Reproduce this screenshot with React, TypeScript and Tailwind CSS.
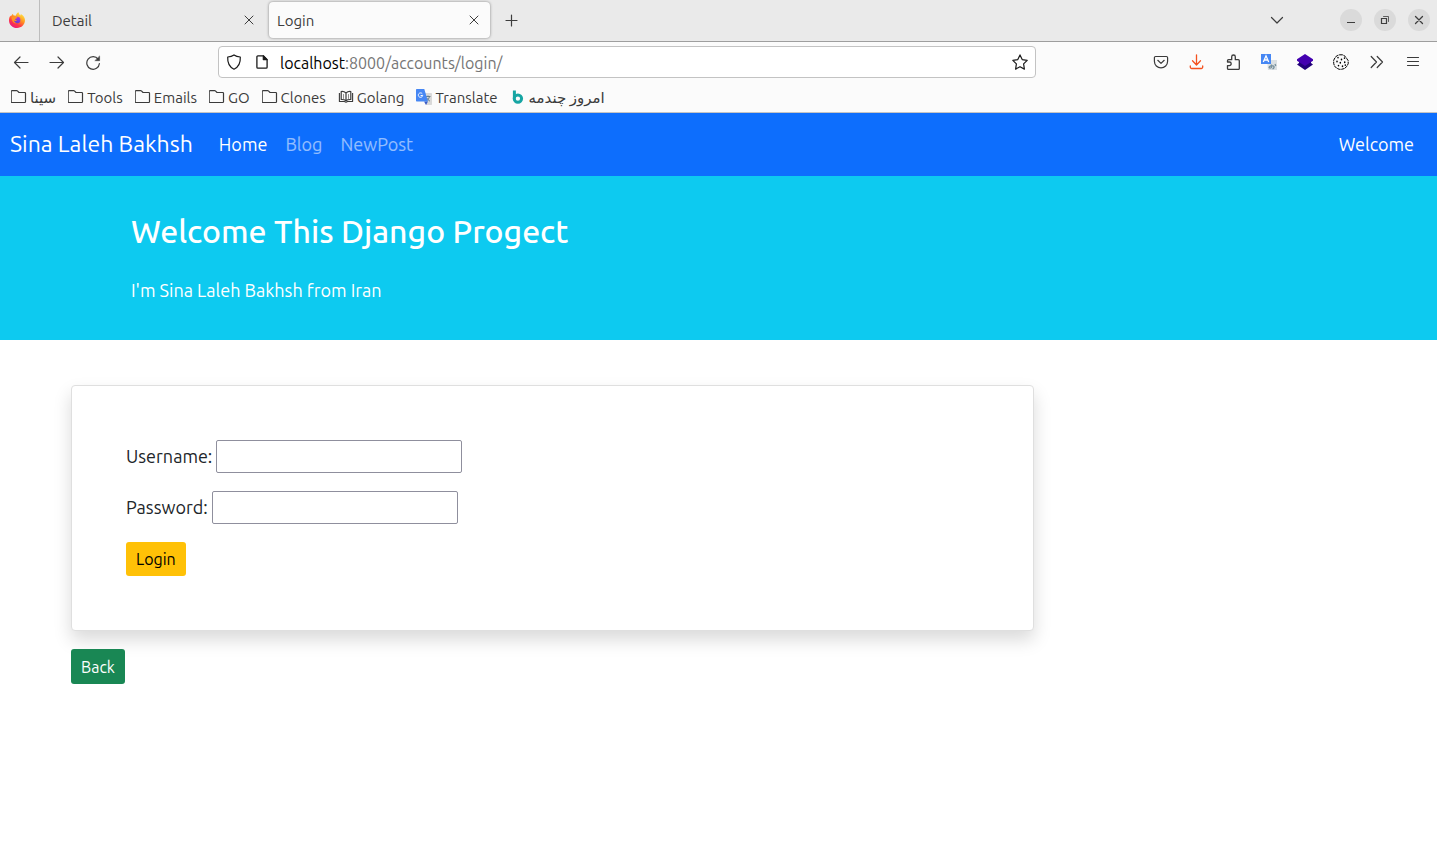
import type { ReactNode } from "react";

type IconProps = { children: ReactNode; className?: string };

function Icon({ children, className = "" }: IconProps) {
  return (
    <svg
      viewBox="0 0 16 16"
      aria-hidden="true"
      className={`size-4 shrink-0 fill-none stroke-current ${className}`}
      strokeWidth="1.2"
      strokeLinecap="round"
      strokeLinejoin="round"
    >
      {children}
    </svg>
  );
}

function FirefoxLogo() {
  return (
    <svg viewBox="0 0 16 16" aria-hidden="true" className="size-4">
      <defs>
        <linearGradient id="flame" x1="0.85" y1="0" x2="0.2" y2="1">
          <stop offset="0" stopColor="#fff44f" />
          <stop offset="0.4" stopColor="#ff9a1f" />
          <stop offset="0.7" stopColor="#ff3647" />
          <stop offset="1" stopColor="#e31587" />
        </linearGradient>
        <linearGradient id="globe" x1="0.7" y1="0" x2="0.3" y2="1">
          <stop offset="0" stopColor="#b833e1" />
          <stop offset="1" stopColor="#5b3fd0" />
        </linearGradient>
      </defs>
      <path
        d="M9.6 0.3c.2 1.7 1 2.4 2.1 3.3-.1-.8 0-1.300.1-1.700C14.500 3.300 16 5.700 16 8.300 16 12.600 12.500 16 8 16S0 12.500 0 8.400c0-1.900.6-3.700 1.500-4.800.1.5.2.7.4 1C2.300 3.400 3 2.400 4 1.800c0 .7.200 1.300.8 1.800.8-.1 1.400 0 2 .2C7.100 2.300 8 .9 9.600.3Z"
        fill="url(#flame)"
      />
      <circle cx="8.200" cy="8" r="3.200" fill="url(#globe)" />
      <path
        d="M2.500 5.300c1.400-1.100 3-1.100 4.300-.3l1.700.3c-.2.900-1 1.300-1.900 1.500-.6.200-.8.600-.6 1 .8 0 1.300.3 1.900.1-.5 1.300-2.200 1.200-3 .7.200 1.400 1.300 2.400 3 2.500-3 1.200-5.400-2.300-5.400-5.800Z"
        fill="#ff9422"
      />
    </svg>
  );
}

function CloseIcon() {
  return (
    <Icon>
      <path d="M4 4l8 8M12 4l-8 8" strokeWidth="1" />
    </Icon>
  );
}

function FolderIcon() {
  return (
    <Icon>
      <path d="M1 13.500h12.700a.8.800 0 0 0 .8-.8V4.300a.8.800 0 0 0-.8-.8H8L6.400 1.900a1 1 0 0 0-.7-.3H1a.8.800 0 0 0-.8.800v10.300a.8.800 0 0 0 .8.800Z" />
    </Icon>
  );
}

function BookIcon() {
  return (
    <Icon>
      <path d="M8 4C6.500 2.600 4.800 2.300 3.200 2.500v8c1.900-.1 3.600.2 4.800 1.300 1.200-1.100 2.900-1.400 4.800-1.300v-8C11.200 2.300 9.500 2.600 8 4ZM8 4v7.800" />
      <path d="M1.400 4v8.500h5L8 13.200l1.600-.7h5V4" strokeWidth="1.100" strokeLinecap="butt" />
      <path d="M5.500 5.500v4M10.500 5.500v4" strokeWidth="0.800" opacity="0.7" />
    </Icon>
  );
}

function TranslateIcon() {
  return (
    <svg viewBox="0 0 16 16" aria-hidden="true" className="size-4 shrink-0">
      <path d="M7 4h8.300a.7.700 0 0 1 .7.700v10.600a.7.700 0 0 1-.7.700H10Z" fill="#d9d9d9" />
      <path d="M9.500 7.500h5M12 6.500v1M13.500 7.600c-.5 2-1.700 3.500-3.300 4.500M10.800 9c.8 1.500 1.700 2.400 3.200 3.200" stroke="#607988" fill="none" strokeWidth="0.900" />
      <path d="M8 12.500h4L10 16Z" fill="#3a5bc7" />
      <path d="M.7 0h7.600L12 12.500H.7a.7.700 0 0 1-.7-.7V.7A.7.700 0 0 1 .7 0Z" fill="#4687f4" />
      <path d="M6.300 4.800A2.200 2.200 0 1 0 6.700 6.500H4.600" stroke="#fff" fill="none" strokeWidth="1" />
    </svg>
  );
}

function TealMark() {
  return (
    <svg viewBox="0 0 16 16" aria-hidden="true" className="size-4 shrink-0">
      <path d="M4.400 1.500v8" stroke="#16a5a3" strokeWidth="3" fill="none" />
      <circle cx="7.900" cy="9.600" r="3.700" stroke="#16a5a3" strokeWidth="3" fill="none" />
    </svg>
  );
}

function ToolButton({ label, children }: { label: string; children: ReactNode }) {
  return (
    <button type="button" aria-label={label} className="flex h-8 w-9 shrink-0 items-center justify-center">
      {children}
    </button>
  );
}

function WindowButton({ label, children }: { label: string; children: ReactNode }) {
  return (
    <button type="button" aria-label={label} className="flex size-[22px] items-center justify-center rounded-full bg-[#dadada]">
      {children}
    </button>
  );
}

function TabStrip() {
  return (
    <div className="flex h-[42px] items-center border-b border-[#9e9e9e] bg-[#eaeaea] pb-px text-[#3d3d3d]">
      <button type="button" aria-label="Firefox" className="-mb-px flex h-[41px] w-10 items-center border-r border-[#bdbdbd] pb-px pl-[9px]">
        <FirefoxLogo />
      </button>
      <div className="flex w-[229px] items-center justify-between pr-3 pl-3">
        <span className="pt-0.5">Detail</span>
        <button type="button" aria-label="Close Detail tab" className="flex">
          <CloseIcon />
        </button>
      </div>
      <div className="flex h-9 w-[221px] items-center justify-between rounded bg-[#fbfbfb] pr-2 pl-2 shadow-[0_0_3px_rgba(0,0,0,0.45)]">
        <span className="pt-0.5">Login</span>
        <button type="button" aria-label="Close Login tab" className="flex">
          <CloseIcon />
        </button>
      </div>
      <button type="button" aria-label="New tab" className="ml-[14px] flex">
        <Icon>
          <path d="M7.500 3v11M2 8.500h11" />
        </Icon>
      </button>
      <div className="mr-[7px] ml-auto flex items-center gap-3">
        <button type="button" aria-label="List all tabs" className="mr-[43px] flex">
          <Icon>
            <path d="M2.500 5.500L8 11l5.500-5.500" />
          </Icon>
        </button>
        <WindowButton label="Minimize">
          <Icon>
            <path d="M4 10.500h8" strokeLinecap="butt" strokeWidth="1" />
          </Icon>
        </WindowButton>
        <WindowButton label="Restore">
          <Icon>
            <path d="M4.500 6.500h5v5h-5Z" strokeLinejoin="miter" />
            <path d="M6.500 4.500h5v5" strokeWidth="0.800" strokeLinejoin="miter" />
          </Icon>
        </WindowButton>
        <WindowButton label="Close window">
          <Icon>
            <path d="M4.500 4.500l7 7M11.500 4.500l-7 7" strokeWidth="1.300" />
          </Icon>
        </WindowButton>
      </div>
    </div>
  );
}

function NavigationBar() {
  return (
    <div className="flex h-10 items-center pr-[6px] pl-[3px] text-[#3b3b3b]">
      <ToolButton label="Back">
        <Icon>
          <path d="M15 8.500H1.500M7 3L1.500 8.500 7 14" />
        </Icon>
      </ToolButton>
      <ToolButton label="Forward">
        <Icon>
          <path d="M1 8.500h13.500M9 3l5.500 5.500L9 14" />
        </Icon>
      </ToolButton>
      <ToolButton label="Reload">
        <Icon>
          <path d="M13.200 5.300A6.300 6.300 0 1 0 14.400 9.500" />
          <path d="M14.600 2.300v4.400h-4.400Z" className="fill-current" strokeWidth="0.500" />
        </Icon>
      </ToolButton>
      <div className="mx-[107px] flex h-8 min-w-0 flex-1 items-center rounded border border-[#c3c3c3] bg-white px-[7px] text-[#1a1a1a]">
        <Icon className="mr-3">
          <path d="M8 .9c1.800 1.300 3.800 1.900 6.300 2.100.3 5.500-1.600 10-6.300 12.200C3.300 13 1.400 8.500 1.700 3 4.200 2.800 6.200 2.200 8 .9Z" strokeWidth="1.200" />
        </Icon>
        <Icon className="mr-[10px]">
          <path d="M9.300 1.800H3.900a1 1 0 0 0-1 1v10.400a1 1 0 0 0 1 1h8.200a1 1 0 0 0 1-1V5.600Z" strokeWidth="1.300" />
          <path d="M9.300 1.800v3.800h3.800Z" className="fill-current" />
        </Icon>
        <div className="min-w-0 flex-1 truncate pt-0.5 text-[16px] text-black">
          localhost<span className="text-[#757575]">:8000/accounts/login/</span>
        </div>
        <button type="button" aria-label="Bookmark this page" className="flex">
          <Icon>
            <path d="M8 .9l2.200 4.700 5 .7-3.600 3.600.8 5.200L8 12.700l-4.400 2.400.8-5.200L.8 6.300l5-.7Z" strokeWidth="1.200" />
          </Icon>
        </button>
      </div>
      <ToolButton label="Save to Pocket">
        <Icon>
          <path d="M2.600 2.500h10.800a1.200 1.200 0 0 1 1.200 1.200v3.600a6.600 6.600 0 0 1-13.200 0V3.700a1.200 1.200 0 0 1 1.200-1.200ZM4.800 6.300L8 9.400l3.200-3.100" />
        </Icon>
      </ToolButton>
      <ToolButton label="Downloads">
        <Icon className="text-[#f4511e]">
          <path d="M7.500 .8v10M3.500 6.800L7.500 11l4-4.200M1.300 12v1.100a1.400 1.400 0 0 0 1.400 1.400h9.600a1.400 1.400 0 0 0 1.400-1.400V12" strokeWidth="1.300" />
        </Icon>
      </ToolButton>
      <ToolButton label="Extensions">
        <Icon>
          <path d="M2.500 8V6.700a1 1 0 0 1 1-1h3.200V2.800a1.800 1.800 0 0 1 3.600 0v2.900h3a1 1 0 0 1 1 1v7.700a1 1 0 0 1-1 1H3.500a1 1 0 0 1-1-1v-2.800h1.900a1.800 1.800 0 0 0 0-3.600Z" strokeWidth="1.300" />
        </Icon>
      </ToolButton>
      <ToolButton label="Page translator">
        <svg viewBox="0 0 16 16" aria-hidden="true" className="size-4">
          <path d="M6 6h10v10H7Z" fill="#dbe0e3" />
          <path d="M0 0h10v10H0Z" fill="#4687f4" />
          <path d="M2.300 8L5 1.800 7.700 8M3.300 6h3.400" stroke="#fff" strokeWidth="1.300" fill="none" />
          <path d="M10.500 10.500v3c-2 1.500-3.200 0-1.500-1.200 2-1.200 4.500-.5 4 1.200-.2.700-.8 1.200-1.500 1.400M14 10l.8 2" stroke="#78909c" fill="none" strokeWidth="1.300" />
        </svg>
      </ToolButton>
      <ToolButton label="Layers">
        <svg viewBox="0 0 16 16" aria-hidden="true" className="size-4">
          <path d="M0 10.500l2-1.400V7.500h12v1.600l2 1.400L8 16Z" fill="#21007a" />
          <path d="M8 0l8 5.300v1.400L8 12 0 6.700V5.300Z" fill="#4300b0" />
        </svg>
      </ToolButton>
      <ToolButton label="Cookies">
        <Icon className="text-black">
          <path d="M6.500.8h3l2.500 1.400 1.700 2.300 1.500 2.200v3l-1.400 2.700-2.300 2.100-3 .8H6.200l-2.800-1.300L1.500 12 .7 9.500V6.300l1.500-3 2-1.700Z" strokeWidth="1" strokeDasharray="3.500 0.600" strokeLinecap="butt" />
          <path d="M5 3.500v.3M8.500 5.300v.4M11.500 4v.3M4 7.300v.4M7.300 8.600v.3M11.700 8v.4M5.500 11.500v.3M9.500 12v.4M12.300 11v.3" strokeWidth="1.500" />
        </Icon>
      </ToolButton>
      <ToolButton label="More tools">
        <Icon>
          <path d="M2.200 2.500L7.500 8l-5.300 5.500M8.200 2.500L13.500 8l-5.300 5.500" />
        </Icon>
      </ToolButton>
      <ToolButton label="Open application menu">
        <Icon>
          <path d="M2.500 3.500h11M2.500 7.500h11M2.500 11.500h11" />
        </Icon>
      </ToolButton>
    </div>
  );
}

const bookmarks: { label: string; icon: ReactNode }[] = [
  { label: "سینا", icon: <FolderIcon /> },
  { label: "Tools", icon: <FolderIcon /> },
  { label: "Emails", icon: <FolderIcon /> },
  { label: "GO", icon: <FolderIcon /> },
  { label: "Clones", icon: <FolderIcon /> },
  { label: "Golang", icon: <BookIcon /> },
  { label: "Translate", icon: <TranslateIcon /> },
  { label: "امروز چندمه", icon: <TealMark /> },
];

function BookmarksBar() {
  return (
    <div className="flex h-[31px] items-center gap-3 border-b border-[#c4c4c4] pl-[11px] text-[#3b3b3b]">
      {bookmarks.map((bookmark) => (
        <button key={bookmark.label} type="button" className="flex items-center gap-[3px]">
          {bookmark.icon}
          <span className="pt-0.5">{bookmark.label}</span>
        </button>
      ))}
    </div>
  );
}

function Field({ id, label, type }: { id: string; label: string; type: string }) {
  return (
    <div className="flex items-center gap-1">
      <label htmlFor={id}>{label}</label>
      <input id={id} name={id} type={type} className="h-[33px] w-[246px] rounded-[2px] border border-[#8f8f9d] bg-white px-1" />
    </div>
  );
}

export default function App() {
  return (
    <div className="min-h-screen bg-white font-['Ubuntu','Noto_Sans','DejaVu_Sans',sans-serif] text-[#212529]">
      <header className="bg-[#fbfbfb] text-[15px] leading-5">
        <TabStrip />
        <NavigationBar />
        <BookmarksBar />
      </header>
      <nav className="flex h-[63px] items-center bg-[#0d6efd] pr-[23px] pl-[10px] text-[18px] text-white">
        <a href="#home" className="mr-[26px] text-[23px]">
          Sina Laleh Bakhsh
        </a>
        <div className="flex gap-[18px]">
          <a href="#home">Home</a>
          <a href="#blog" className="text-white/55">
            Blog
          </a>
          <a href="#new-post" className="text-white/55">
            NewPost
          </a>
        </div>
        <a href="#welcome" className="ml-auto">
          Welcome
        </a>
      </nav>
      <section className="bg-[#0dcaf0] px-[131px] pt-9 pb-9 text-white">
        <h1 className="text-[32px] leading-[38px] font-medium">Welcome This Django Progect</h1>
        <p className="mt-[26px] text-[18px] leading-7">I'm Sina Laleh Bakhsh from Iran</p>
      </section>
      <main className="px-[71px] pt-[45px]">
        <form
          className="flex max-w-[963px] flex-col items-start gap-[18px] rounded border border-[#dfdfdf] bg-white p-[54px] text-[18px] shadow-[0_9px_18px_rgba(0,0,0,0.15)]"
          onSubmit={(event) => event.preventDefault()}
        >
          <Field id="username" label="Username:" type="text" />
          <Field id="password" label="Password:" type="password" />
          <button type="submit" className="h-[34px] rounded-[3px] bg-[#ffc107] px-[10px] text-[16px] text-black">
            Login
          </button>
        </form>
        <a href="#back" className="mt-[18px] inline-flex h-[35px] items-center rounded-[3px] bg-[#198754] px-[10px] text-[16px] text-white">
          Back
        </a>
      </main>
    </div>
  );
}
